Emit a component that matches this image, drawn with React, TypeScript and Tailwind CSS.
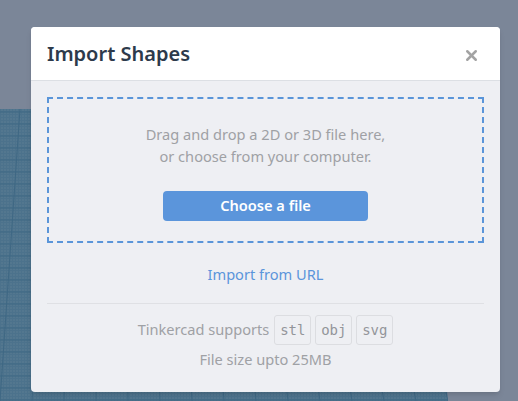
import { X } from "lucide-react";

const Workplane = () => {
  const vLines = [];
  for (let i = -10; i < 30; i++) {
    const xb = i * 32;
    const xt = 20 + i * 26;
    vLines.push(<line key={"v" + i} x1={xt} y1={109} x2={xb} y2={401} stroke="#3f6884" strokeWidth="1" />);
  }
  const hLines = [];
  for (let y = 112; y < 401; y += 12) {
    hLines.push(<line key={"h" + y} x1={0} y1={y} x2={518} y2={y} stroke="#3f6884" strokeWidth="1" />);
  }
  return (
    <svg className="absolute inset-0" width="518" height="401" viewBox="0 0 518 401">
      <defs>
        <clipPath id="plane">
          <polygon points="0,109 420,109 448,401 0,401" />
        </clipPath>
        <pattern id="fine" width="3" height="3" patternUnits="userSpaceOnUse">
          <rect width="3" height="3" fill="#53778f" />
          <rect width="1" height="3" fill="#4c728c" />
          <rect width="3" height="1" fill="#4c728c" />
        </pattern>
      </defs>
      <g clipPath="url(#plane)">
        <rect x="0" y="109" width="518" height="292" fill="url(#fine)" />
        {vLines}
        {hLines}
      </g>
    </svg>
  );
};

export default function App() {
  return (
    <div className="relative h-[401px] w-[518px] overflow-hidden bg-[#7b8698] font-['Noto_Sans','Open_Sans',sans-serif]">
      <Workplane />
      <div className="absolute left-[31px] top-[27px] w-[469px] overflow-hidden rounded-[4px] bg-[#eeeff3] shadow-md">
        {/* Header */}
        <div className="flex h-[54px] items-center justify-between border-b border-[#dcdfe4] bg-white pl-4 pr-[20px]">
          <h2 className="text-[20px] font-semibold text-[#2d3a4b]">Import Shapes</h2>
          <X className="mt-1 h-[17px] w-[17px] text-[#a3a3a3]" strokeWidth={3.5} />
        </div>

        {/* Body */}
        <div className="px-4 pt-4 pb-[22px]">
          <div className="flex h-[146px] flex-col items-center border-2 border-dashed border-[#5a95d9] pt-[24px]">
            <p className="text-center text-[14.6px] leading-[22px] text-[#9fa1a5]">
              Drag and drop a 2D or 3D file here,
              <br />
              or choose from your computer.
            </p>
            <button className="mt-[24px] h-[30px] w-[205px] rounded-[4px] bg-[#5b95db] text-[14.6px] font-semibold text-white">
              Choose a file
            </button>
          </div>

          <div className="mt-[20px] text-center text-[14.6px] leading-[22px] text-[#5b95db]">Import from URL</div>

          <div className="mt-[18px] border-t border-[#dfe0e4]" />

          <div className="mt-[11px] flex items-center justify-center gap-1 text-[14.6px] text-[#9fa1a5]">
            <span className="mr-[1px]">Tinkercad supports</span>
            {["stl", "obj", "svg"].map((t) => (
              <span
                key={t}
                className="flex h-[30px] w-[37px] items-center justify-center rounded-[3px] border border-[#dcdde1] font-['DejaVu_Sans_Mono',monospace] text-[14px] text-[#93959a]"
              >
                {t}
              </span>
            ))}
          </div>
          <div className="mt-[3px] text-center text-[14.6px] leading-[22px] text-[#9fa1a5]">File size upto 25MB</div>
        </div>
      </div>
    </div>
  );
}
